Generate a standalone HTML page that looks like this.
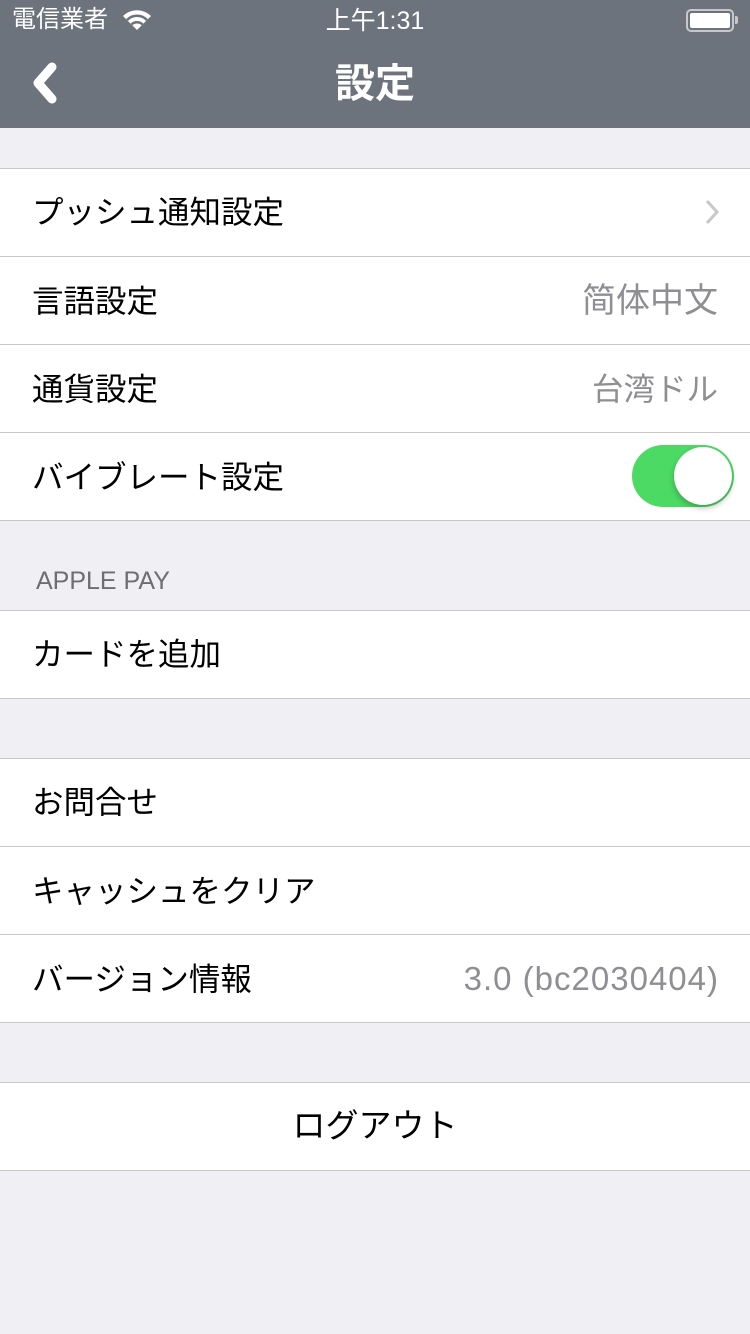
<!DOCTYPE html><html><head><meta charset="utf-8"><style>
*{margin:0;padding:0;box-sizing:border-box}
body{width:750px;height:1334px;background:#efeff4;font-family:"Liberation Sans","Noto Sans CJK JP",sans-serif;position:relative;overflow:hidden}
.bar{position:absolute;left:0;top:0;width:750px;height:128px;background:#6c737d;color:#fff}
.abs{position:absolute}
.sec{position:absolute;left:0;width:750px;background:#fff;border-top:1px solid #c8c7cc;border-bottom:1px solid #c8c7cc}
.row{height:88px;position:relative;border-top:1px solid #c8c7cc;font-size:31.5px;line-height:88px;padding-left:32px;color:#000}
.row:first-child{border-top:none;height:87px;line-height:86px}
.val{position:absolute;right:32px;top:0;color:#8e8e93}
</style></head><body>
<div class="bar">
<div class="abs" style="left:12px;top:4px;font-size:24px;line-height:32px">電信業者</div>
<svg class="abs" style="left:122px;top:9px" width="30" height="22" viewBox="0 0 30 22"><path d="M15 21 L1 7 A20 20 0 0 1 29 7 Z" fill="#fff"/><path d="M5 11 A14 14 0 0 1 25 11" stroke="#6c737d" stroke-width="2.5" fill="none"/><path d="M9.5 15.5 A8 8 0 0 1 20.5 15.5" stroke="#6c737d" stroke-width="2.5" fill="none"/></svg>
<div class="abs" style="left:0;width:750px;text-align:center;top:5px;font-size:25px;line-height:32px">上午1:31</div>
<div class="abs" style="left:686px;top:9px;width:48px;height:23px;border:2px solid #c8c8cc;border-radius:5px;padding:2px"><div style="background:#fff;width:100%;height:100%;border-radius:2px"></div></div>
<div class="abs" style="left:735px;top:16px;width:3px;height:8px;background:#c8c8cc;border-radius:0 2px 2px 0"></div>
<svg class="abs" style="left:30px;top:62px" width="30" height="42" viewBox="0 0 30 42"><path d="M22 5 L8 21 L22 37" stroke="#fff" stroke-width="9" stroke-linecap="round" stroke-linejoin="round" fill="none"/></svg>
<div class="abs" style="left:0;width:750px;text-align:center;top:58px;font-size:40px;font-weight:bold;line-height:52px">設定</div>
</div>
<div class="sec" style="top:168px">
<div class="row">プッシュ通知設定<svg class="abs" style="right:30px;top:30px" width="16" height="26" viewBox="0 0 16 26"><path d="M3 2 L13 13 L3 24" stroke="#c7c7cc" stroke-width="3" fill="none"/></svg></div>
<div class="row">言語設定<span class="val" style="font-size:34px">简体中文</span></div>
<div class="row">通貨設定<span class="val" style="font-size:31.5px">台湾ドル</span></div>
<div class="row">バイブレート設定<div class="abs" style="right:16px;top:12px;width:102px;height:62px;border-radius:31px;background:#4cd964"><div class="abs" style="right:2px;top:2px;width:58px;height:58px;border-radius:50%;background:#fff;box-shadow:0 3px 6px rgba(0,0,0,.25)"></div></div></div>
</div>
<div class="abs" style="left:36px;top:566px;font-size:25px;color:#6d6d72;line-height:30px">APPLE PAY</div>
<div class="sec" style="top:610px"><div class="row">カードを追加</div></div>
<div class="sec" style="top:758px">
<div class="row">お問合せ</div>
<div class="row">キャッシュをクリア</div>
<div class="row">バージョン情報<span class="val" style="font-size:33px;letter-spacing:1px;right:31px">3.0 (bc2030404)</span></div>
</div>
<div class="sec" style="top:1082px"><div class="row" style="padding:0;text-align:center;font-size:33px">ログアウト</div></div>
</body></html>
